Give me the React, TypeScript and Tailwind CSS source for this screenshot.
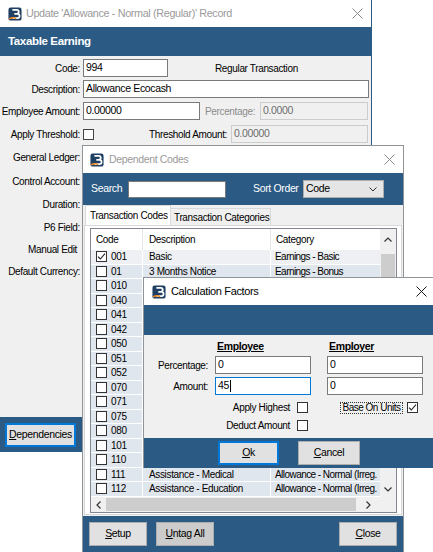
import React from "react";

const BLUE = "bg-[#2b5b85]";

function Logo() {
  return (
    <svg width="14" height="14" viewBox="0 0 16 16" className="shrink-0">
      <rect x="0.5" y="0.5" width="15" height="15" rx="2.5" fill="#1f3f63" />
      <path d="M5 3.2h5a2.3 2.3 0 0 1 0 4.6H7.2M7.2 7.8h3.6a2.4 2.4 0 0 1 0 4.8H5" stroke="#fff" strokeWidth="2" fill="none" />
      <path d="M1.2 13.6c2.6-1.6 5.4-1.8 8.2-0.4" stroke="#f08a24" strokeWidth="1.6" fill="none" />
    </svg>
  );
}

function CloseX({ dark }: { dark?: boolean }) {
  return (
    <svg width="11" height="11" viewBox="0 0 11 11">
      <path d="M0.5 0.5l10 10M10.5 0.5l-10 10" stroke={dark ? "#1a1a1a" : "#8a8a8a"} strokeWidth="1" />
    </svg>
  );
}

function Check({ checked, className = "" }: { checked?: boolean; className?: string }) {
  return (
    <span className={`flex h-[11px] w-[11px] shrink-0 items-center justify-center border border-[#333] bg-white ${className}`}>
      {checked && (
        <svg width="9" height="9" viewBox="0 0 9 9">
          <path d="M1 4.6l2.3 2.4L8 1.6" stroke="#222" strokeWidth="1.1" fill="none" />
        </svg>
      )}
    </span>
  );
}

function Btn({ children, focus, dim, className = "" }: { children: React.ReactNode; focus?: boolean; dim?: boolean; className?: string }) {
  return (
    <div
      className={`flex h-[24px] items-center justify-center text-[10.5px] text-black ${
        focus ? "border-2 border-[#0078d7]" : "border border-[#adadad]"
      } ${dim ? "bg-[#cccccc]" : "bg-[#e1e1e1]"} ${className}`}
    >
      {children}
    </div>
  );
}

function Field({ value, className = "", disabled, focus }: { value?: string; className?: string; disabled?: boolean; focus?: boolean }) {
  return (
    <div
      className={`flex h-[18px] items-center border pl-[2px] text-[10.5px] ${
        disabled
          ? "border-[#cccccc] bg-[#f0f0f0] text-[#6d6d6d]"
          : focus
          ? "border-[#0078d7] bg-white text-black"
          : "border-[#7a7a7a] bg-white text-black"
      } ${className}`}
    >
      {value}
      {focus && <span className="ml-px h-[12px] w-px bg-black" />}
    </div>
  );
}

function Label({ children, className = "" }: { children: React.ReactNode; className?: string }) {
  return <span className={`w-[80px] shrink-0 text-right ${className}`}>{children}</span>;
}

const rows: { code: string; desc?: string; cat?: string; checked?: boolean }[] = [
  { code: "001", desc: "Basic", cat: "Earnings - Basic", checked: true },
  { code: "01", desc: "3 Months Notice", cat: "Earnings - Bonus" },
  { code: "010" },
  { code: "040" },
  { code: "041" },
  { code: "042" },
  { code: "050" },
  { code: "051" },
  { code: "052" },
  { code: "070" },
  { code: "071" },
  { code: "075" },
  { code: "080" },
  { code: "101" },
  { code: "110" },
  { code: "111", desc: "Assistance - Medical", cat: "Allowance - Normal (Irreg." },
  { code: "112", desc: "Assistance - Education", cat: "Allowance - Normal (Irreg." },
];

function MainWindow() {
  return (
    <div className="absolute left-0 top-0 flex h-[452px] w-[372px] flex-col border-r border-[#2b5b85] bg-[#f0f0f0]">
      <div className="flex h-[27px] shrink-0 items-center bg-white pl-[8px] pr-[8px]">
        <Logo />
        <span className="ml-[4px] text-[10.8px] text-[#9a9a9a]">Update 'Allowance - Normal (Regular)' Record</span>
        <span className="ml-auto flex">
          <CloseX />
        </span>
      </div>
      <div className={`flex h-[29px] shrink-0 items-center ${BLUE} pl-[8px] text-[11.5px] font-bold text-white`}>Taxable Earning</div>
      <div className="flex flex-1 flex-col pt-px text-[10px] text-black">
        <div className="flex h-[22px] items-center">
          <Label>Code:</Label>
          <Field value="994" className="ml-[3px] w-[85px]" />
          <span className="ml-[47px]">Regular Transaction</span>
        </div>
        <div className="flex h-[20px] items-center">
          <Label>Description:</Label>
          <Field value="Allowance Ecocash" className="ml-[3px] w-[286px]" />
        </div>
        <div className="flex h-[24px] items-center">
          <Label>Employee Amount:</Label>
          <Field value="0.00000" className="ml-[3px] w-[117px]" />
          <span className="ml-[5px] w-[55px] text-[#8c8c8c]">Percentage:</span>
          <Field value="0.0000" disabled className="w-[108px]" />
        </div>
        <div className="flex h-[22px] items-center">
          <Label>Apply Threshold:</Label>
          <Check className="ml-[3px] border-[#444]" />
          <span className="ml-[55px] w-[82px]">Threshold Amount:</span>
          <Field value="0.00000" disabled className="w-[137px]" />
        </div>
        <div className="flex h-[24px] items-center">
          <Label>General Ledger:</Label>
        </div>
        <div className="flex h-[24px] items-center">
          <Label>Control Account:</Label>
        </div>
        <div className="flex h-[22px] items-center">
          <Label>Duration:</Label>
        </div>
        <div className="flex h-[24px] items-center">
          <Label>P6 Field:</Label>
        </div>
        <div className="flex h-[20px] items-center">
          <Label className="pr-[3px]">Manual Edit</Label>
        </div>
        <div className="flex h-[24px] items-center">
          <Label>Default Currency:</Label>
        </div>
      </div>
      <div className={`flex h-[35px] shrink-0 items-center ${BLUE} pl-[5px]`}>
        <Btn focus className="w-[71px]">
          <span>
            <u>D</u>ependencies
          </span>
        </Btn>
      </div>
    </div>
  );
}

function DependentWindow() {
  return (
    <div className="absolute left-[82px] top-[145px] flex h-[407px] w-[322px] flex-col border-x border-t border-[#8f9499] bg-[#f0f0f0]">
      <div className="flex h-[27px] shrink-0 items-center bg-white pl-[7px] pr-[8px]">
        <Logo />
        <span className="ml-[5px] text-[10.5px] text-[#9a9a9a]">Dependent Codes</span>
        <span className="ml-auto flex">
          <CloseX />
        </span>
      </div>
      <div className={`flex h-[32px] shrink-0 items-center ${BLUE} pl-[8px] text-[10.5px] text-white`}>
        <span className="w-[37px]">Search</span>
        <div className="h-[17px] w-[98px] border border-[#7a7a7a] bg-white" />
        <span className="ml-[27px] w-[50px]">Sort Order</span>
        <div className="flex h-[18px] w-[81px] items-center justify-between border border-[#adadad] bg-[#e5e5e5] pl-[2px] pr-[6px] text-[10.5px] text-black">
          Code
          <svg width="8" height="5" viewBox="0 0 8 5">
            <path d="M0.5 0.5l3.5 3.5 3.5-3.5" stroke="#333" fill="none" />
          </svg>
        </div>
      </div>
      <div className="flex flex-1 flex-col text-[10px] text-black">
        <div className="flex h-[20px] items-end pl-[2px]">
          <div className="flex h-[20px] w-[86px] items-center border border-b-0 border-[#d9d9d9] bg-white pl-[4px]">Transaction Codes</div>
          <div className="flex h-[17px] w-[100px] items-center border border-b-0 border-l-0 border-[#d9d9d9] bg-[#f0f0f0] pl-[3px]">
            Transaction Categories
          </div>
        </div>
        <div className="mx-px h-[290px] border border-[#d9d9d9] bg-white pl-[5px] pt-[2px]">
          <div className="flex h-[285px] w-[307px] flex-col border border-[#828790] bg-white">
            <div className="flex min-h-0 flex-1">
              <div className="flex min-w-0 flex-1 flex-col overflow-hidden">
                <div className="flex h-[21px] shrink-0 items-center">
                  <span className="h-full w-[52px] border-r border-[#e5e5e5] pl-[5px] leading-[21px]">Code</span>
                  <span className="h-full w-[128px] border-r border-[#e5e5e5] pl-[6px] leading-[21px]">Description</span>
                  <span className="h-full flex-1 pl-[5px] leading-[21px]">Category</span>
                </div>
                {rows.map((r) => (
                  <div
                    key={r.code}
                    className={`flex h-[14.5px] shrink-0 items-center border-b border-white ${
                      r.checked ? "bg-[#eef0f3]" : "bg-[#e0e6ed]"
                    }`}
                  >
                    <span className="flex h-full w-[52px] items-center border-r border-white pl-[5px]">
                      <Check checked={r.checked} />
                      <span className="ml-[4px]">{r.code}</span>
                    </span>
                    <span className="h-full w-[128px] overflow-hidden border-r border-white pl-[6px] leading-[13.5px]">{r.desc}</span>
                    <span className="h-full flex-1 overflow-hidden pl-[4px] leading-[13.5px] tracking-[-0.55px]">{r.cat}</span>
                  </div>
                ))}
              </div>
              <div className="flex w-[16px] shrink-0 flex-col bg-[#f0f0f0]">
                <div className="flex h-[21px] items-center justify-center">
                  <svg width="8" height="5" viewBox="0 0 8 5">
                    <path d="M0.5 4.5l3.5-3.5 3.5 3.5" stroke="#333" strokeWidth="1.2" fill="none" />
                  </svg>
                </div>
                <div className="mx-px mt-[4px] h-[190px] bg-[#cdcdcd]" />
                <div className="mt-auto flex h-[16px] items-center justify-center">
                  <svg width="8" height="5" viewBox="0 0 8 5">
                    <path d="M0.5 0.5l3.5 3.5 3.5-3.5" stroke="#333" strokeWidth="1.2" fill="none" />
                  </svg>
                </div>
              </div>
            </div>
            <div className="flex h-[15px] shrink-0 bg-[#f0f0f0]">
              <div className="flex w-[15px] items-center justify-center">
                <svg width="5" height="8" viewBox="0 0 5 8">
                  <path d="M4.5 0.5l-3.5 3.5 3.5 3.5" stroke="#333" strokeWidth="1.2" fill="none" />
                </svg>
              </div>
              <div className="my-px w-[250px] bg-[#cdcdcd]" />
              <div className="flex flex-1 items-center justify-center">
                <svg width="5" height="8" viewBox="0 0 5 8">
                  <path d="M0.5 0.5l3.5 3.5-3.5 3.5" stroke="#333" strokeWidth="1.2" fill="none" />
                </svg>
              </div>
              <div className="w-[16px]" />
            </div>
          </div>
        </div>
      </div>
      <div className={`flex h-[36px] shrink-0 items-center ${BLUE} px-[6px]`}>
        <Btn className="w-[58px]">
          <span>
            <u>S</u>etup
          </span>
        </Btn>
        <Btn dim className="ml-[9px] w-[58px]">
          <span>
            <u>U</u>ntag All
          </span>
        </Btn>
        <Btn className="ml-auto w-[58px]">
          <span>
            <u>C</u>lose
          </span>
        </Btn>
      </div>
    </div>
  );
}

function CalcWindow() {
  return (
    <div className="absolute left-[143px] top-[277px] flex h-[191px] w-[291px] flex-col border-l border-t border-[#8f9499] bg-[#f0f0f0]">
      <div className="flex h-[27px] shrink-0 items-center bg-white pl-[8px] pr-[7px]">
        <Logo />
        <span className="ml-[5px] text-[11px] text-black">Calculation Factors</span>
        <span className="ml-auto flex">
          <CloseX dark />
        </span>
      </div>
      <div className={`h-[30px] shrink-0 ${BLUE}`} />
      <div className="flex flex-1 flex-col pt-[3px] text-[10px] text-black">
        <div className="flex h-[18px] items-center text-[10.5px] font-bold underline">
          <span className="ml-[73px] w-[112px]">Employee</span>
          <span>Employer</span>
        </div>
        <div className="flex h-[18px] items-center">
          <span className="w-[64px] text-right">Percentage:</span>
          <Field value="0" className="ml-[7px] w-[96px]" />
          <Field value="0" className="ml-[16px] w-[96px]" />
        </div>
        <div className="mt-[3px] flex h-[18px] items-center">
          <span className="w-[64px] text-right">Amount:</span>
          <Field value="45" focus className="ml-[7px] w-[96px]" />
          <Field value="0" className="ml-[16px] w-[96px]" />
        </div>
        <div className="mt-[6px] flex h-[13px] items-center">
          <span className="w-[146px] text-right">Apply Highest</span>
          <Check className="ml-[7px]" />
          <span className="ml-[32px] flex h-[12px] w-[63px] items-center justify-center border border-dotted border-[#333] tracking-[-0.5px]">
            Base On Units
          </span>
          <Check checked className="ml-[4px]" />
        </div>
        <div className="mt-[5px] flex h-[13px] items-center">
          <span className="w-[146px] text-right">Deduct Amount</span>
          <Check className="ml-[7px]" />
        </div>
      </div>
      <div className={`flex h-[30px] shrink-0 items-center ${BLUE} pl-[74px]`}>
        <Btn focus className="h-[23px] w-[61px]">
          <span>
            <u>O</u>k
          </span>
        </Btn>
        <Btn className="ml-[19px] h-[23px] w-[62px]">
          <span>
            <u>C</u>ancel
          </span>
        </Btn>
      </div>
    </div>
  );
}

export default function App() {
  return (
    <div className="relative h-[552px] w-[433px] overflow-hidden whitespace-nowrap bg-white font-['Liberation_Sans',Arial,sans-serif] tracking-[-0.35px]">
      <MainWindow />
      <DependentWindow />
      <CalcWindow />
    </div>
  );
}
